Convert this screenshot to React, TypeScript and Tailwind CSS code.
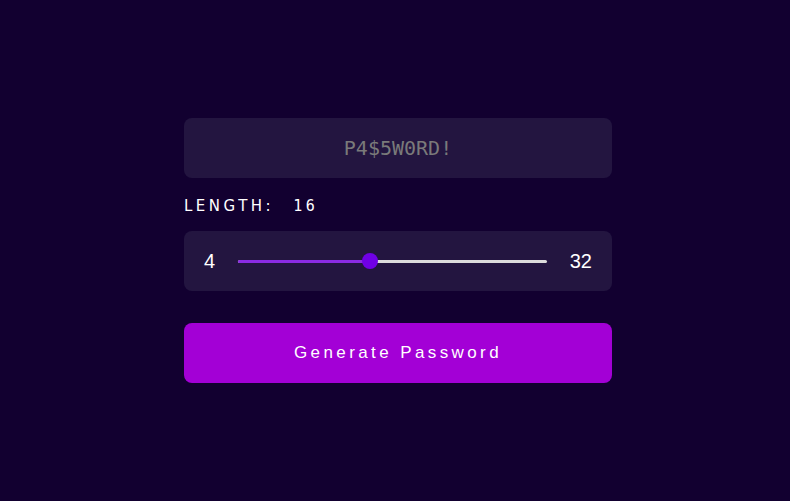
const App = () => {
  const length = 16;
  const min = 4;
  const max = 32;
  const pct = ((length - min) / (max - min)) * 100;

  return (
    <div className="flex h-[501px] w-full items-center justify-center bg-[#120030] pl-[6px]">
      <div className="flex w-[428px] flex-col">
        <div className="flex h-[60px] items-center justify-center rounded-lg bg-[#231540] font-['DejaVu_Sans_Mono',monospace] text-[20px] text-[#7a7a7a]">
          P4$5W0RD!
        </div>

        <div className="mt-[20px] mb-[17px] flex h-[16px] items-center leading-[16px] text-white">
          <span className="font-['DejaVu_Sans',sans-serif] text-[15px] tracking-[3.5px]">LENGTH:</span>
          <span className="ml-[19px] font-['DejaVu_Sans_Mono',monospace] text-[15px] tracking-[3.5px]">
            {length}
          </span>
        </div>

        <div className="flex h-[60px] items-center rounded-lg bg-[#231540] pl-[20px] pr-[20px] font-['Liberation_Sans',sans-serif] text-[20px] text-white">
          <span className="w-[14px]">{min}</span>
          <div className="relative ml-[20px] mr-[23px] flex h-[16px] flex-1 items-center">
            <div className="h-[3px] w-full rounded bg-[#dcdcdc]" />
            <div
              className="absolute left-0 top-[6.5px] h-[3px] rounded bg-[#8a2be2]"
              style={{ width: `${pct}%` }}
            />
            <div
              className="absolute top-0 h-[16px] w-[16px] -translate-x-1/2 rounded-full bg-[#7000e6]"
              style={{ left: `${pct}%` }}
            />
          </div>
          <span>{max}</span>
        </div>

        <button className="mt-[32px] h-[60px] rounded-lg bg-[#a300d6] font-['Liberation_Sans',sans-serif] text-[17px] tracking-[3.4px] text-white">
          Generate Password
        </button>
      </div>
    </div>
  );
};

export default App;
